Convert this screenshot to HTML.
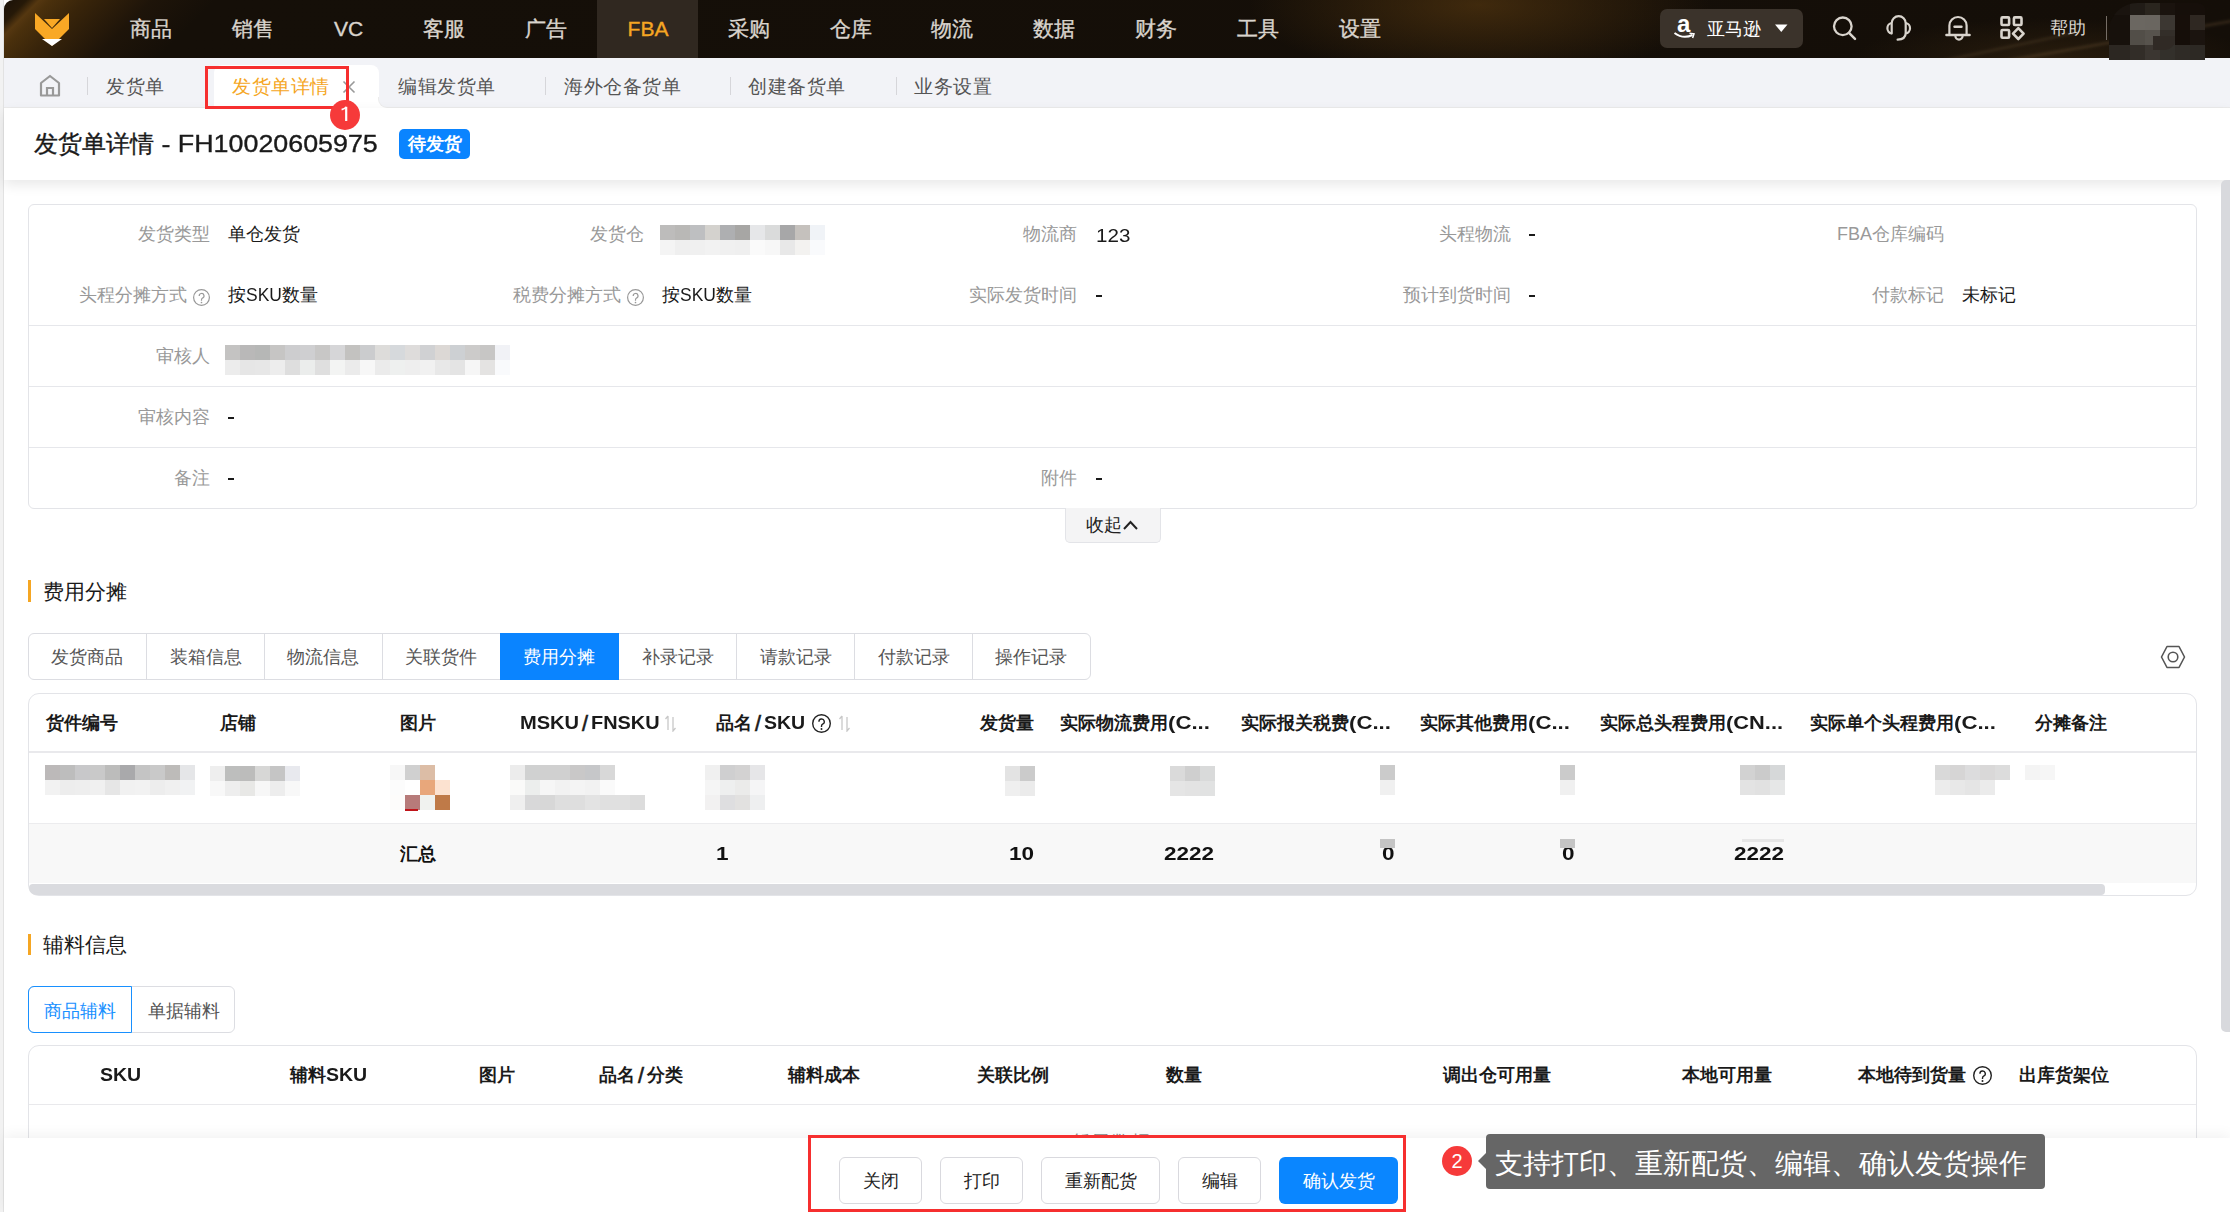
<!DOCTYPE html>
<html><head><meta charset="utf-8"><style>
*{box-sizing:border-box;margin:0;padding:0}
html,body{width:2230px;height:1212px;overflow:hidden;background:#fff;font-family:"Liberation Sans",sans-serif;color:#222}
.a{position:absolute;white-space:nowrap}
</style></head><body>
<div class="a" style="left:0px;top:0px;width:4px;height:1212px;background:#f2f2f2;border-right:1px solid #e2e2e2"></div>
<div class="a" style="left:4px;top:0;width:2226px;height:58px;border-top-left-radius:9px;overflow:hidden;background:radial-gradient(ellipse 230px 75px at 1475px 5px, rgba(90,58,16,.62), rgba(0,0,0,0)),radial-gradient(ellipse 200px 40px at 2050px 58px, rgba(60,42,18,.5), rgba(0,0,0,0)),linear-gradient(135deg,#1a1108 0px,#261908 16px,#553710 25px,#4a300c 33px,#38240a 58px,#1e1409 105px,#150f08 150px,#140e08 100%)"></div>
<div class="a" style="left:1980px;top:38px;width:300px;height:2px;background:rgba(140,110,70,.35);transform:rotate(-10deg);filter:blur(1.5px)"></div>
<div class="a" style="left:1880px;top:52px;width:200px;height:2px;background:rgba(140,110,70,.25);transform:rotate(-12deg);filter:blur(1.5px)"></div>
<svg class="a" style="left:34px;top:12px" width="36" height="36" viewBox="0 0 36 36"><path d="M1 1 L1 17 L18 34 L35 17 L35 1 L18 17 Z" fill="#f9a825"/><path d="M10 7 L26 7 L18 16 Z" fill="#f9a825"/><path d="M8 27 L28 27 L18 34 Z" fill="#ffffff"/></svg>
<div class="a" style="left:597px;top:0px;width:101px;height:58px;background:#302820;"></div>
<div class="a" style="left:91px;width:120px;text-align:center;top:0;height:58px;line-height:58px;font-size:21px;color:#d9d4cd;-webkit-text-stroke:0.35px #d9d4cd">商品</div>
<div class="a" style="left:192.5px;width:120px;text-align:center;top:0;height:58px;line-height:58px;font-size:21px;color:#d9d4cd;-webkit-text-stroke:0.35px #d9d4cd">销售</div>
<div class="a" style="left:288.5px;width:120px;text-align:center;top:0;height:58px;line-height:58px;font-size:21px;color:#d9d4cd;-webkit-text-stroke:0.35px #d9d4cd">VC</div>
<div class="a" style="left:384px;width:120px;text-align:center;top:0;height:58px;line-height:58px;font-size:21px;color:#d9d4cd;-webkit-text-stroke:0.35px #d9d4cd">客服</div>
<div class="a" style="left:485.70000000000005px;width:120px;text-align:center;top:0;height:58px;line-height:58px;font-size:21px;color:#d9d4cd;-webkit-text-stroke:0.35px #d9d4cd">广告</div>
<div class="a" style="left:588px;width:120px;text-align:center;top:0;height:58px;line-height:58px;font-size:21px;color:#f5a623;-webkit-text-stroke:0.35px #f5a623">FBA</div>
<div class="a" style="left:688.5px;width:120px;text-align:center;top:0;height:58px;line-height:58px;font-size:21px;color:#d9d4cd;-webkit-text-stroke:0.35px #d9d4cd">采购</div>
<div class="a" style="left:790.5px;width:120px;text-align:center;top:0;height:58px;line-height:58px;font-size:21px;color:#d9d4cd;-webkit-text-stroke:0.35px #d9d4cd">仓库</div>
<div class="a" style="left:892px;width:120px;text-align:center;top:0;height:58px;line-height:58px;font-size:21px;color:#d9d4cd;-webkit-text-stroke:0.35px #d9d4cd">物流</div>
<div class="a" style="left:994px;width:120px;text-align:center;top:0;height:58px;line-height:58px;font-size:21px;color:#d9d4cd;-webkit-text-stroke:0.35px #d9d4cd">数据</div>
<div class="a" style="left:1096px;width:120px;text-align:center;top:0;height:58px;line-height:58px;font-size:21px;color:#d9d4cd;-webkit-text-stroke:0.35px #d9d4cd">财务</div>
<div class="a" style="left:1198px;width:120px;text-align:center;top:0;height:58px;line-height:58px;font-size:21px;color:#d9d4cd;-webkit-text-stroke:0.35px #d9d4cd">工具</div>
<div class="a" style="left:1300px;width:120px;text-align:center;top:0;height:58px;line-height:58px;font-size:21px;color:#d9d4cd;-webkit-text-stroke:0.35px #d9d4cd">设置</div>
<div class="a" style="left:1660px;top:9px;width:143px;height:39px;background:#3b332b;border-radius:7px"></div>
<div class="a" style="left:1677px;top:9px;font-size:24px;font-weight:bold;color:#fff;line-height:30px">a</div>
<svg class="a" style="left:1673px;top:30px" width="24" height="10" viewBox="0 0 24 10"><path d="M1.5 3 Q10 9.5 19.5 5" stroke="#fff" stroke-width="2" fill="none"/><path d="M16.5 3.2 L21 3.8 L19.6 8" stroke="#fff" stroke-width="1.5" fill="none"/></svg>
<div class="a" style="left:1707px;top:15px;font-size:18px;line-height:28px;color:#fff;font-weight:normal;">亚马逊</div>
<svg class="a" style="left:1775px;top:24px" width="13" height="9" viewBox="0 0 13 9"><path d="M0 0.5 L12.5 0.5 L6.25 8 Z" fill="#fff"/></svg>
<svg class="a" style="left:1830px;top:14px" width="28" height="28" viewBox="0 0 28 28"><circle cx="12.8" cy="12.3" r="8.8" stroke="#d9d4cd" stroke-width="2.3" fill="none"/><path d="M19 18.8 L25 24.8" stroke="#d9d4cd" stroke-width="2.5" stroke-linecap="round"/></svg>
<svg class="a" style="left:1884px;top:14px" width="30" height="28" viewBox="0 0 30 28"><path d="M7.7 19.5 L7.7 9.2 A7 7 0 0 1 21.7 9.2 L21.7 19 Q21.7 25.4 13.6 25.6" stroke="#d9d4cd" stroke-width="2.2" fill="none" stroke-linecap="round"/><path d="M7.7 9 A5 5.3 0 0 0 7.7 19.5" stroke="#d9d4cd" stroke-width="2.2" fill="none"/><path d="M21.7 9 A5 5.3 0 0 1 21.7 19.5" stroke="#d9d4cd" stroke-width="2.2" fill="none"/></svg>
<svg class="a" style="left:1944px;top:14px" width="28" height="28" viewBox="0 0 28 28"><path d="M5.4 21 L5.4 11.6 A8.6 8.6 0 0 1 22.6 11.6 L22.6 21" stroke="#d9d4cd" stroke-width="2.2" fill="none"/><path d="M2.4 21 L25.6 21" stroke="#d9d4cd" stroke-width="2.4" stroke-linecap="round"/><path d="M10.5 12.7 L17.5 12.7" stroke="#d9d4cd" stroke-width="2.4" stroke-linecap="round"/><path d="M11.4 22 A3.6 3.6 0 0 0 18.6 22" stroke="#d9d4cd" stroke-width="2.2" fill="none"/></svg>
<svg class="a" style="left:1998px;top:14px" width="28" height="28" viewBox="0 0 28 28"><rect x="3.5" y="3.4" width="7.6" height="7.6" rx="1" stroke="#d9d4cd" stroke-width="2.6" fill="none"/><rect x="15.9" y="3.4" width="7.6" height="7.6" rx="1" stroke="#d9d4cd" stroke-width="2.6" fill="none"/><rect x="3.5" y="16" width="7.6" height="7.8" rx="1" stroke="#d9d4cd" stroke-width="2.6" fill="none"/><path d="M20.3 14.2 L25.6 19.6 L20.3 25 L15 19.6 Z" stroke="#d9d4cd" stroke-width="2.6" fill="none" stroke-linejoin="round"/></svg>
<div class="a" style="left:2050px;top:14px;font-size:18px;line-height:28px;color:#d9d4cd;font-weight:normal;">帮助</div>
<div class="a" style="left:2106px;top:16px;width:1px;height:24px;background:#756d65;"></div>
<div class="a" style="left:2109px;top:3px;width:97px;height:57px;overflow:hidden;border-radius:28px 8px 0 0;z-index:5">
<div class="a" style="left:0px;top:-3px;width:21px;height:15px;background:#1a140f"></div>
<div class="a" style="left:21px;top:-3px;width:15px;height:15px;background:#211c17"></div>
<div class="a" style="left:36px;top:-3px;width:15px;height:15px;background:#2a251e"></div>
<div class="a" style="left:51px;top:-3px;width:15px;height:15px;background:#1a130e"></div>
<div class="a" style="left:66px;top:-3px;width:15px;height:15px;background:#160f0a"></div>
<div class="a" style="left:81px;top:-3px;width:15px;height:15px;background:#160f0a"></div>
<div class="a" style="left:0px;top:12px;width:21px;height:15px;background:#16100b"></div>
<div class="a" style="left:21px;top:12px;width:15px;height:15px;background:#6b6761"></div>
<div class="a" style="left:36px;top:12px;width:15px;height:15px;background:#6a6660"></div>
<div class="a" style="left:51px;top:12px;width:15px;height:15px;background:#3c3732"></div>
<div class="a" style="left:66px;top:12px;width:15px;height:15px;background:#170f0a"></div>
<div class="a" style="left:81px;top:12px;width:15px;height:15px;background:#2f2822"></div>
<div class="a" style="left:0px;top:27px;width:21px;height:15px;background:#17110c"></div>
<div class="a" style="left:21px;top:27px;width:15px;height:15px;background:#524e48"></div>
<div class="a" style="left:36px;top:27px;width:15px;height:15px;background:#57534d"></div>
<div class="a" style="left:51px;top:27px;width:15px;height:15px;background:#332e29"></div>
<div class="a" style="left:66px;top:27px;width:15px;height:15px;background:#150e09"></div>
<div class="a" style="left:81px;top:27px;width:15px;height:15px;background:#1b140f"></div>
<div class="a" style="left:0px;top:42px;width:21px;height:15px;background:#2c2722"></div>
<div class="a" style="left:21px;top:42px;width:15px;height:15px;background:#322d28"></div>
<div class="a" style="left:36px;top:42px;width:15px;height:15px;background:#3b3631"></div>
<div class="a" style="left:51px;top:42px;width:15px;height:15px;background:#33302b"></div>
<div class="a" style="left:66px;top:42px;width:15px;height:15px;background:#2f2b26"></div>
<div class="a" style="left:81px;top:42px;width:15px;height:15px;background:#2d2924"></div>
<div class="a" style="left:44px;top:33px;width:22px;height:14px;background:#302a25;border-radius:0 0 10px 0"></div>
</div>
<div class="a" style="left:4px;top:58px;width:2226px;height:50px;background:#f2f3f7;border-bottom:1px solid #ebebeb"></div>
<svg class="a" style="left:39px;top:74px" width="22" height="23" viewBox="0 0 22 23"><path d="M2 21.5 L2 9 L11 2 L20 9 L20 21.5 Z" stroke="#999" stroke-width="2.2" fill="none" stroke-linejoin="round"/><path d="M8 21.5 L8 14 L14 14 L14 21.5" stroke="#999" stroke-width="2.2" fill="none"/></svg>
<div class="a" style="left:87px;top:77px;width:1px;height:18px;background:#d6d6da;"></div>
<div class="a" style="left:214px;top:65px;width:165px;height:44px;background:#fff;border-radius:8px 8px 0 0"></div>
<div class="a" style="left:378px;top:97px;width:10px;height:11px;background:#fff;"></div>
<div class="a" style="left:378px;top:97px;width:10px;height:11px;background:#f2f3f7;border-bottom-left-radius:9px;border-left:1px solid #ececec;border-bottom:1px solid #ebebeb"></div>
<div class="a" style="left:106px;top:73px;font-size:19px;line-height:28px;color:#555;font-weight:normal;letter-spacing:0.6px">发货单</div>
<div class="a" style="left:232px;top:73px;font-size:19px;line-height:28px;color:#f5a623;font-weight:normal;letter-spacing:0.6px">发货单详情</div>
<div class="a" style="left:398px;top:73px;font-size:19px;line-height:28px;color:#555;font-weight:normal;letter-spacing:0.6px">编辑发货单</div>
<div class="a" style="left:564px;top:73px;font-size:19px;line-height:28px;color:#555;font-weight:normal;letter-spacing:0.6px">海外仓备货单</div>
<div class="a" style="left:748px;top:73px;font-size:19px;line-height:28px;color:#555;font-weight:normal;letter-spacing:0.6px">创建备货单</div>
<div class="a" style="left:914px;top:73px;font-size:19px;line-height:28px;color:#555;font-weight:normal;letter-spacing:0.6px">业务设置</div>
<svg class="a" style="left:342px;top:80px" width="14" height="14" viewBox="0 0 14 14"><path d="M1.5 1.5 L12.5 12.5 M12.5 1.5 L1.5 12.5" stroke="#999" stroke-width="1.6"/></svg>
<div class="a" style="left:545px;top:77px;width:1px;height:18px;background:#d6d6da;"></div>
<div class="a" style="left:730px;top:77px;width:1px;height:18px;background:#d6d6da;"></div>
<div class="a" style="left:896px;top:77px;width:1px;height:18px;background:#d6d6da;"></div>
<div class="a" style="left:4px;top:108px;width:2226px;height:72px;background:#fff;box-shadow:0 5px 12px rgba(0,0,0,.09)"></div>
<div class="a" style="left:34px;top:126px;font-size:24px;line-height:36px;color:#1a1a1a;font-weight:normal;-webkit-text-stroke:0.35px #1a1a1a">发货单详情<span style="display:inline-block;white-space:pre;width:223.74px;transform:scaleX(1.1180);transform-origin:0 0"> - FH10020605975</span></div>
<div class="a" style="left:399px;top:129px;width:71px;height:30px;background:#0a84ff;border-radius:5px;color:#fff;font-size:18px;font-weight:bold;text-align:center;line-height:30px">待发货</div>
<div class="a" style="left:28px;top:204px;width:2169px;height:305px;border:1px solid #e3e4e8;border-radius:6px;background:#fff"></div>
<div class="a" style="left:29px;top:325px;width:2167px;height:1px;background:#e6e7eb;"></div>
<div class="a" style="left:29px;top:386px;width:2167px;height:1px;background:#e6e7eb;"></div>
<div class="a" style="left:29px;top:447px;width:2167px;height:1px;background:#e6e7eb;"></div>
<div class="a" style="right:2020px;top:220px;font-size:18px;line-height:28px;color:#999">发货类型</div>
<div class="a" style="left:228px;top:220px;font-size:18px;line-height:28px;color:#1a1a1a">单仓发货</div>
<div class="a" style="right:1586px;top:220px;font-size:18px;line-height:28px;color:#999">发货仓</div>
<div class="a" style="left:660px;top:225px;width:15px;height:15px;background:#bdbcbb;"></div>
<div class="a" style="left:675px;top:225px;width:15px;height:15px;background:#b9b8b6;"></div>
<div class="a" style="left:690px;top:225px;width:15px;height:15px;background:#bebfc1;"></div>
<div class="a" style="left:705px;top:225px;width:15px;height:15px;background:#d4d2ce;"></div>
<div class="a" style="left:720px;top:225px;width:15px;height:15px;background:#aeafb1;"></div>
<div class="a" style="left:735px;top:225px;width:15px;height:15px;background:#a7a6a4;"></div>
<div class="a" style="left:750px;top:225px;width:15px;height:15px;background:#e6e7e9;"></div>
<div class="a" style="left:765px;top:225px;width:15px;height:15px;background:#dadbdb;"></div>
<div class="a" style="left:780px;top:225px;width:15px;height:15px;background:#a7a7a8;"></div>
<div class="a" style="left:795px;top:225px;width:15px;height:15px;background:#c5c1bd;"></div>
<div class="a" style="left:810px;top:225px;width:15px;height:15px;background:#f0f3f7;"></div>
<div class="a" style="left:660px;top:240px;width:15px;height:15px;background:#f4f4f4;"></div>
<div class="a" style="left:675px;top:240px;width:15px;height:15px;background:#efefef;"></div>
<div class="a" style="left:690px;top:240px;width:15px;height:15px;background:#f0f0f0;"></div>
<div class="a" style="left:705px;top:240px;width:15px;height:15px;background:#f2f2f2;"></div>
<div class="a" style="left:720px;top:240px;width:15px;height:15px;background:#f0f0f0;"></div>
<div class="a" style="left:735px;top:240px;width:15px;height:15px;background:#efefef;"></div>
<div class="a" style="left:750px;top:240px;width:15px;height:15px;background:#fafafa;"></div>
<div class="a" style="left:765px;top:240px;width:15px;height:15px;background:#f7f7f7;"></div>
<div class="a" style="left:780px;top:240px;width:15px;height:15px;background:#e8e8e8;"></div>
<div class="a" style="left:795px;top:240px;width:15px;height:15px;background:#f3f2f0;"></div>
<div class="a" style="left:810px;top:240px;width:15px;height:15px;background:#f9fafc;"></div>
<div class="a" style="right:1153px;top:220px;font-size:18px;line-height:28px;color:#999">物流商</div>
<div class="a" style="left:1096px;top:222px;font-size:18px;line-height:28px;color:#1a1a1a"><span style="display:inline-block;white-space:pre;width:34.36px;transform:scaleX(1.1441);transform-origin:0 0">123</span></div>
<div class="a" style="right:719px;top:220px;font-size:18px;line-height:28px;color:#999">头程物流</div>
<div class="a" style="left:1529px;top:234.0px;width:6px;height:2.4px;background:#1a1a1a"></div>
<div class="a" style="right:286px;top:220px;font-size:18px;line-height:28px;color:#999">FBA仓库编码</div>
<svg class="a" style="left:193px;top:289px" width="17" height="17" viewBox="0 0 17 17"><circle cx="8.5" cy="8.5" r="7.9" stroke="#999" stroke-width="1.2" fill="none"/><g transform="scale(1.0000)"><path d="M6.2 6.9 A2.4 2.4 0 1 1 9.5 9.1 Q8.5 9.7 8.5 10.9 L8.5 11.7" stroke="#999" stroke-width="1.20" fill="none"/><circle cx="8.5" cy="13.5" r="0.84" fill="#999"/></g></svg>
<div class="a" style="right:2043px;top:281px;font-size:18px;line-height:28px;color:#999">头程分摊方式</div>
<div class="a" style="left:228px;top:281px;font-size:18px;line-height:28px;color:#1a1a1a">按<span style="display:inline-block;white-space:pre;width:35.92px;transform:scaleX(0.9705);transform-origin:0 0">SKU</span>数量</div>
<svg class="a" style="left:627px;top:289px" width="17" height="17" viewBox="0 0 17 17"><circle cx="8.5" cy="8.5" r="7.9" stroke="#999" stroke-width="1.2" fill="none"/><g transform="scale(1.0000)"><path d="M6.2 6.9 A2.4 2.4 0 1 1 9.5 9.1 Q8.5 9.7 8.5 10.9 L8.5 11.7" stroke="#999" stroke-width="1.20" fill="none"/><circle cx="8.5" cy="13.5" r="0.84" fill="#999"/></g></svg>
<div class="a" style="right:1609px;top:281px;font-size:18px;line-height:28px;color:#999">税费分摊方式</div>
<div class="a" style="left:662px;top:281px;font-size:18px;line-height:28px;color:#1a1a1a">按<span style="display:inline-block;white-space:pre;width:35.92px;transform:scaleX(0.9705);transform-origin:0 0">SKU</span>数量</div>
<div class="a" style="right:1153px;top:281px;font-size:18px;line-height:28px;color:#999">实际发货时间</div>
<div class="a" style="left:1096px;top:294.5px;width:6px;height:2.4px;background:#1a1a1a"></div>
<div class="a" style="right:719px;top:281px;font-size:18px;line-height:28px;color:#999">预计到货时间</div>
<div class="a" style="left:1529px;top:294.5px;width:6px;height:2.4px;background:#1a1a1a"></div>
<div class="a" style="right:286px;top:281px;font-size:18px;line-height:28px;color:#999">付款标记</div>
<div class="a" style="left:1962px;top:281px;font-size:18px;line-height:28px;color:#1a1a1a">未标记</div>
<div class="a" style="right:2020px;top:342px;font-size:18px;line-height:28px;color:#999">审核人</div>
<div class="a" style="left:225px;top:345px;width:15px;height:15px;background:#c4c3c2;"></div>
<div class="a" style="left:240px;top:345px;width:15px;height:15px;background:#b9b8b8;"></div>
<div class="a" style="left:255px;top:345px;width:15px;height:15px;background:#b6b7b6;"></div>
<div class="a" style="left:270px;top:345px;width:15px;height:15px;background:#c6c5c4;"></div>
<div class="a" style="left:285px;top:345px;width:15px;height:15px;background:#cdcdcf;"></div>
<div class="a" style="left:300px;top:345px;width:15px;height:15px;background:#cfcfd1;"></div>
<div class="a" style="left:315px;top:345px;width:15px;height:15px;background:#c8c7c6;"></div>
<div class="a" style="left:330px;top:345px;width:15px;height:15px;background:#d6d6d8;"></div>
<div class="a" style="left:345px;top:345px;width:15px;height:15px;background:#c3c2c0;"></div>
<div class="a" style="left:360px;top:345px;width:15px;height:15px;background:#cbccce;"></div>
<div class="a" style="left:375px;top:345px;width:15px;height:15px;background:#dddcda;"></div>
<div class="a" style="left:390px;top:345px;width:15px;height:15px;background:#d6d9dc;"></div>
<div class="a" style="left:405px;top:345px;width:15px;height:15px;background:#dedcdb;"></div>
<div class="a" style="left:420px;top:345px;width:15px;height:15px;background:#d0d1d3;"></div>
<div class="a" style="left:435px;top:345px;width:15px;height:15px;background:#dcd8d5;"></div>
<div class="a" style="left:450px;top:345px;width:15px;height:15px;background:#cdd0d3;"></div>
<div class="a" style="left:465px;top:345px;width:15px;height:15px;background:#cccbca;"></div>
<div class="a" style="left:480px;top:345px;width:15px;height:15px;background:#c7c6c5;"></div>
<div class="a" style="left:495px;top:345px;width:15px;height:15px;background:#f1f2f6;"></div>
<div class="a" style="left:225px;top:360px;width:15px;height:15px;background:#ececec;"></div>
<div class="a" style="left:240px;top:360px;width:15px;height:15px;background:#e6e6e6;"></div>
<div class="a" style="left:255px;top:360px;width:15px;height:15px;background:#e7e7e7;"></div>
<div class="a" style="left:270px;top:360px;width:15px;height:15px;background:#ededed;"></div>
<div class="a" style="left:285px;top:360px;width:15px;height:15px;background:#dedede;"></div>
<div class="a" style="left:300px;top:360px;width:15px;height:15px;background:#ebedec;"></div>
<div class="a" style="left:315px;top:360px;width:15px;height:15px;background:#dfdfdf;"></div>
<div class="a" style="left:330px;top:360px;width:15px;height:15px;background:#f3f4f3;"></div>
<div class="a" style="left:345px;top:360px;width:15px;height:15px;background:#ebebeb;"></div>
<div class="a" style="left:360px;top:360px;width:15px;height:15px;background:#f7f7f7;"></div>
<div class="a" style="left:375px;top:360px;width:15px;height:15px;background:#ebebeb;"></div>
<div class="a" style="left:390px;top:360px;width:15px;height:15px;background:#eef0ef;"></div>
<div class="a" style="left:405px;top:360px;width:15px;height:15px;background:#eeeeee;"></div>
<div class="a" style="left:420px;top:360px;width:15px;height:15px;background:#f1f1f1;"></div>
<div class="a" style="left:435px;top:360px;width:15px;height:15px;background:#e8e8e8;"></div>
<div class="a" style="left:450px;top:360px;width:15px;height:15px;background:#e4e4e4;"></div>
<div class="a" style="left:465px;top:360px;width:15px;height:15px;background:#f6f6f6;"></div>
<div class="a" style="left:480px;top:360px;width:15px;height:15px;background:#e4e3e2;"></div>
<div class="a" style="left:495px;top:360px;width:15px;height:15px;background:#f9fafc;"></div>
<div class="a" style="right:2020px;top:403px;font-size:18px;line-height:28px;color:#999">审核内容</div>
<div class="a" style="left:228px;top:416.5px;width:6px;height:2.4px;background:#1a1a1a"></div>
<div class="a" style="right:2020px;top:464px;font-size:18px;line-height:28px;color:#999">备注</div>
<div class="a" style="left:228px;top:477.5px;width:6px;height:2.4px;background:#1a1a1a"></div>
<div class="a" style="right:1153px;top:464px;font-size:18px;line-height:28px;color:#999">附件</div>
<div class="a" style="left:1096px;top:477.5px;width:6px;height:2.4px;background:#1a1a1a"></div>
<div class="a" style="left:1065px;top:508px;width:96px;height:35px;background:#f4f4f5;border:1px solid #e3e4e8;border-top:none;border-radius:0 0 5px 5px"></div>
<div class="a" style="left:1086px;top:511px;font-size:18px;line-height:28px;color:#222;font-weight:normal;">收起</div>
<svg class="a" style="left:1122px;top:518px" width="17" height="13" viewBox="0 0 17 13"><path d="M2 11 L8.5 4 L15 11" stroke="#222" stroke-width="2" fill="none"/></svg>
<div class="a" style="left:28px;top:580px;width:3px;height:22px;background:#f5a623;"></div>
<div class="a" style="left:43px;top:577px;font-size:21px;line-height:30px;color:#1a1a1a;font-weight:normal;">费用分摊</div>
<div class="a" style="left:28px;top:633px;width:1063px;height:47px;border:1px solid #dcdde2;border-radius:6px;background:#fff"></div>
<div class="a" style="left:28px;width:118.5px;text-align:center;top:643px;font-size:18px;line-height:28px;color:#555">发货商品</div>
<div class="a" style="left:146px;top:634px;width:1px;height:45px;background:#dcdde2;"></div>
<div class="a" style="left:146.5px;width:118.10000000000002px;text-align:center;top:643px;font-size:18px;line-height:28px;color:#555">装箱信息</div>
<div class="a" style="left:264px;top:634px;width:1px;height:45px;background:#dcdde2;"></div>
<div class="a" style="left:264.6px;width:117.59999999999997px;text-align:center;top:643px;font-size:18px;line-height:28px;color:#555">物流信息</div>
<div class="a" style="left:382px;top:634px;width:1px;height:45px;background:#dcdde2;"></div>
<div class="a" style="left:382.2px;width:117.40000000000003px;text-align:center;top:643px;font-size:18px;line-height:28px;color:#555">关联货件</div>
<div class="a" style="left:499.6px;top:633px;width:119.10000000000002px;height:47px;background:#0a84ff"></div>
<div class="a" style="left:499.6px;width:119.10000000000002px;text-align:center;top:643px;font-size:18px;line-height:28px;color:#fff">费用分摊</div>
<div class="a" style="left:618.7px;width:117.69999999999993px;text-align:center;top:643px;font-size:18px;line-height:28px;color:#555">补录记录</div>
<div class="a" style="left:736px;top:634px;width:1px;height:45px;background:#dcdde2;"></div>
<div class="a" style="left:736.4px;width:118.30000000000007px;text-align:center;top:643px;font-size:18px;line-height:28px;color:#555">请款记录</div>
<div class="a" style="left:854px;top:634px;width:1px;height:45px;background:#dcdde2;"></div>
<div class="a" style="left:854.7px;width:117.69999999999993px;text-align:center;top:643px;font-size:18px;line-height:28px;color:#555">付款记录</div>
<div class="a" style="left:972px;top:634px;width:1px;height:45px;background:#dcdde2;"></div>
<div class="a" style="left:972.4px;width:118.00000000000011px;text-align:center;top:643px;font-size:18px;line-height:28px;color:#555">操作记录</div>
<svg class="a" style="left:2160px;top:645px" width="26" height="24" viewBox="0 0 26 24"><path d="M7 1.5 L19 1.5 L24.5 12 L19 22.5 L7 22.5 L1.5 12 Z" stroke="#555" stroke-width="1.6" fill="none" stroke-linejoin="round"/><circle cx="13" cy="12" r="4.8" stroke="#555" stroke-width="1.6" fill="none"/></svg>
<div class="a" style="left:28px;top:693px;width:2169px;height:203px;border:1px solid #e3e4e8;border-radius:11px;background:#fff;overflow:hidden"></div>
<div class="a" style="left:29px;top:751px;width:2167px;height:2px;background:#e9e9ec;"></div>
<div class="a" style="left:29px;top:823px;width:2167px;height:60px;background:#f8f8f8;border-top:1px solid #ececee"></div>
<div class="a" style="left:29px;top:884px;width:2076px;height:11px;background:#dadbdf;border-radius:6px 6px 6px 11px"></div>
<div class="a" style="left:46px;top:709px;font-size:18px;line-height:28px;font-weight:bold;color:#1a1a1a">货件编号</div>
<div class="a" style="left:220px;top:709px;font-size:18px;line-height:28px;font-weight:bold;color:#1a1a1a">店铺</div>
<div class="a" style="left:400px;top:709px;font-size:18px;line-height:28px;font-weight:bold;color:#1a1a1a">图片</div>
<div class="a" style="left:520px;top:709px;font-size:18px;line-height:28px;font-weight:bold;color:#1a1a1a"><span style="display:inline-block;white-space:pre;width:59.12px;transform:scaleX(1.1156);transform-origin:0 0">MSKU</span><span style="display:inline-block;font-size:21.6px;line-height:0;margin:0 2.5px 0 3px;position:relative;top:1.8px;font-weight:normal;-webkit-text-stroke:0.6px">/</span><span style="display:inline-block;white-space:pre;width:68.57px;transform:scaleX(1.1060);transform-origin:0 0">FNSKU</span></div>
<div class="a" style="left:716px;top:709px;font-size:18px;line-height:28px;font-weight:bold;color:#1a1a1a">品名<span style="display:inline-block;font-size:21.6px;line-height:0;margin:0 2.5px 0 3px;position:relative;top:1.8px;font-weight:normal;-webkit-text-stroke:0.6px">/</span><span style="display:inline-block;white-space:pre;width:41.21px;transform:scaleX(1.0844);transform-origin:0 0">SKU</span></div>
<div class="a" style="right:1196px;top:709px;font-size:18px;line-height:28px;font-weight:bold;color:#1a1a1a">发货量</div>
<div class="a" style="left:1060px;top:709px;font-size:18px;line-height:28px;font-weight:bold;color:#1a1a1a">实际物流费用<span style="display:inline-block;white-space:pre;width:41.95px;transform:scaleX(1.2340);transform-origin:0 0">(C...</span></div>
<div class="a" style="left:1241px;top:709px;font-size:18px;line-height:28px;font-weight:bold;color:#1a1a1a">实际报关税费<span style="display:inline-block;white-space:pre;width:41.95px;transform:scaleX(1.2340);transform-origin:0 0">(C...</span></div>
<div class="a" style="left:1420px;top:709px;font-size:18px;line-height:28px;font-weight:bold;color:#1a1a1a">实际其他费用<span style="display:inline-block;white-space:pre;width:41.95px;transform:scaleX(1.2340);transform-origin:0 0">(C...</span></div>
<div class="a" style="left:1600px;top:709px;font-size:18px;line-height:28px;font-weight:bold;color:#1a1a1a">实际总头程费用<span style="display:inline-block;white-space:pre;width:57.01px;transform:scaleX(1.2132);transform-origin:0 0">(CN...</span></div>
<div class="a" style="left:1810px;top:709px;font-size:18px;line-height:28px;font-weight:bold;color:#1a1a1a">实际单个头程费用<span style="display:inline-block;white-space:pre;width:41.95px;transform:scaleX(1.2340);transform-origin:0 0">(C...</span></div>
<div class="a" style="left:2035px;top:709px;font-size:18px;line-height:28px;font-weight:bold;color:#1a1a1a">分摊备注</div>
<svg class="a" style="left:812px;top:714px" width="19" height="19" viewBox="0 0 19 19"><circle cx="9.5" cy="9.5" r="8.8" stroke="#222" stroke-width="1.4" fill="none"/><g transform="scale(1.1176)"><path d="M6.2 6.9 A2.4 2.4 0 1 1 9.5 9.1 Q8.5 9.7 8.5 10.9 L8.5 11.7" stroke="#222" stroke-width="1.25" fill="none"/><circle cx="8.5" cy="13.5" r="0.88" fill="#222"/></g></svg>
<svg class="a" style="left:664px;top:715px" width="13" height="17" viewBox="0 0 13 17"><path d="M4 1 L4 15 M4 1 L1.5 4" stroke="#c8c8c8" stroke-width="1.3" fill="none"/><path d="M9 2 L9 16 L11.5 13" stroke="#c8c8c8" stroke-width="1.3" fill="none"/></svg>
<svg class="a" style="left:838px;top:715px" width="13" height="17" viewBox="0 0 13 17"><path d="M4 1 L4 15 M4 1 L1.5 4" stroke="#c8c8c8" stroke-width="1.3" fill="none"/><path d="M9 2 L9 16 L11.5 13" stroke="#c8c8c8" stroke-width="1.3" fill="none"/></svg>
<div class="a" style="left:45px;top:765px;width:15px;height:15px;background:#bcb9b9;"></div>
<div class="a" style="left:60px;top:765px;width:15px;height:15px;background:#bdbdbd;"></div>
<div class="a" style="left:75px;top:765px;width:15px;height:15px;background:#c8c8ca;"></div>
<div class="a" style="left:90px;top:765px;width:15px;height:15px;background:#c9c9c9;"></div>
<div class="a" style="left:105px;top:765px;width:15px;height:15px;background:#bcbcbb;"></div>
<div class="a" style="left:120px;top:765px;width:15px;height:15px;background:#a9a9ab;"></div>
<div class="a" style="left:135px;top:765px;width:15px;height:15px;background:#c4c4c4;"></div>
<div class="a" style="left:150px;top:765px;width:15px;height:15px;background:#c9c9c9;"></div>
<div class="a" style="left:165px;top:765px;width:15px;height:15px;background:#bdbbb9;"></div>
<div class="a" style="left:180px;top:765px;width:15px;height:15px;background:#e5e6e8;"></div>
<div class="a" style="left:45px;top:780px;width:15px;height:15px;background:#f2f2f2;"></div>
<div class="a" style="left:60px;top:780px;width:15px;height:15px;background:#ededed;"></div>
<div class="a" style="left:75px;top:780px;width:15px;height:15px;background:#eeeeee;"></div>
<div class="a" style="left:90px;top:780px;width:15px;height:15px;background:#f0f0f0;"></div>
<div class="a" style="left:105px;top:780px;width:15px;height:15px;background:#e6e6e6;"></div>
<div class="a" style="left:120px;top:780px;width:15px;height:15px;background:#f1f1f1;"></div>
<div class="a" style="left:135px;top:780px;width:15px;height:15px;background:#f2f2f2;"></div>
<div class="a" style="left:150px;top:780px;width:15px;height:15px;background:#ededed;"></div>
<div class="a" style="left:165px;top:780px;width:15px;height:15px;background:#f0f0f0;"></div>
<div class="a" style="left:180px;top:780px;width:15px;height:15px;background:#f1f2f3;"></div>
<div class="a" style="left:210px;top:766px;width:15px;height:15px;background:#eeeeee;"></div>
<div class="a" style="left:225px;top:766px;width:15px;height:15px;background:#bdbebd;"></div>
<div class="a" style="left:240px;top:766px;width:15px;height:15px;background:#bcbcbb;"></div>
<div class="a" style="left:255px;top:766px;width:15px;height:15px;background:#d7d7d6;"></div>
<div class="a" style="left:270px;top:766px;width:15px;height:15px;background:#c5c5c5;"></div>
<div class="a" style="left:285px;top:766px;width:15px;height:15px;background:#e8e9ee;"></div>
<div class="a" style="left:210px;top:781px;width:15px;height:15px;background:#f8f8f8;"></div>
<div class="a" style="left:225px;top:781px;width:15px;height:15px;background:#eeeeee;"></div>
<div class="a" style="left:240px;top:781px;width:15px;height:15px;background:#e8e8e6;"></div>
<div class="a" style="left:255px;top:781px;width:15px;height:15px;background:#f7f7f7;"></div>
<div class="a" style="left:270px;top:781px;width:15px;height:15px;background:#ededed;"></div>
<div class="a" style="left:285px;top:781px;width:15px;height:15px;background:#f8f8f8;"></div>
<div class="a" style="left:390px;top:765px;width:15px;height:15px;background:#f7f7f7;"></div>
<div class="a" style="left:405px;top:765px;width:15px;height:15px;background:#d0d0d0;"></div>
<div class="a" style="left:420px;top:765px;width:15px;height:15px;background:#dcbda6;"></div>
<div class="a" style="left:390px;top:780px;width:15px;height:15px;background:#fcfcfc;"></div>
<div class="a" style="left:420px;top:780px;width:15px;height:15px;background:#e8a77b;"></div>
<div class="a" style="left:435px;top:780px;width:15px;height:15px;background:#fce2d0;"></div>
<div class="a" style="left:390px;top:795px;width:15px;height:15px;background:#fdfcfb;"></div>
<div class="a" style="left:405px;top:795px;width:15px;height:15px;background:#b77b7a;"></div>
<div class="a" style="left:420px;top:795px;width:15px;height:15px;background:#f0f2ef;"></div>
<div class="a" style="left:435px;top:795px;width:15px;height:15px;background:#bf7a48;"></div>
<div class="a" style="left:405px;top:809px;width:13px;height:2px;background:#c0141a;"></div>
<div class="a" style="left:510px;top:765px;width:15px;height:15px;background:#ececec;"></div>
<div class="a" style="left:525px;top:765px;width:15px;height:15px;background:#d0d1d1;"></div>
<div class="a" style="left:540px;top:765px;width:15px;height:15px;background:#d0d0d0;"></div>
<div class="a" style="left:555px;top:765px;width:15px;height:15px;background:#d0d0d0;"></div>
<div class="a" style="left:570px;top:765px;width:15px;height:15px;background:#c9c8c8;"></div>
<div class="a" style="left:585px;top:765px;width:15px;height:15px;background:#c6c7c9;"></div>
<div class="a" style="left:600px;top:765px;width:15px;height:15px;background:#d8d8d8;"></div>
<div class="a" style="left:510px;top:780px;width:15px;height:15px;background:#fafaf9;"></div>
<div class="a" style="left:525px;top:780px;width:15px;height:15px;background:#eceeed;"></div>
<div class="a" style="left:540px;top:780px;width:15px;height:15px;background:#f6f6f6;"></div>
<div class="a" style="left:555px;top:780px;width:15px;height:15px;background:#f2f2f2;"></div>
<div class="a" style="left:570px;top:780px;width:15px;height:15px;background:#f4f4f4;"></div>
<div class="a" style="left:585px;top:780px;width:15px;height:15px;background:#f2f2f2;"></div>
<div class="a" style="left:600px;top:780px;width:15px;height:15px;background:#fafafa;"></div>
<div class="a" style="left:510px;top:795px;width:15px;height:15px;background:#efefef;"></div>
<div class="a" style="left:525px;top:795px;width:15px;height:15px;background:#d8d8d9;"></div>
<div class="a" style="left:540px;top:795px;width:15px;height:15px;background:#d7d7d7;"></div>
<div class="a" style="left:555px;top:795px;width:15px;height:15px;background:#dedede;"></div>
<div class="a" style="left:570px;top:795px;width:15px;height:15px;background:#dedede;"></div>
<div class="a" style="left:585px;top:795px;width:15px;height:15px;background:#e3e3e3;"></div>
<div class="a" style="left:600px;top:795px;width:15px;height:15px;background:#e0e0e0;"></div>
<div class="a" style="left:615px;top:795px;width:15px;height:15px;background:#e0e0e0;"></div>
<div class="a" style="left:630px;top:795px;width:15px;height:15px;background:#dcdcdc;"></div>
<div class="a" style="left:705px;top:765px;width:15px;height:15px;background:#f0f0f0;"></div>
<div class="a" style="left:720px;top:765px;width:15px;height:15px;background:#cfcfd0;"></div>
<div class="a" style="left:735px;top:765px;width:15px;height:15px;background:#d3d2d2;"></div>
<div class="a" style="left:750px;top:765px;width:15px;height:15px;background:#e6e6e8;"></div>
<div class="a" style="left:705px;top:780px;width:15px;height:15px;background:#f5f5f5;"></div>
<div class="a" style="left:720px;top:780px;width:15px;height:15px;background:#eeefef;"></div>
<div class="a" style="left:735px;top:780px;width:15px;height:15px;background:#ebebea;"></div>
<div class="a" style="left:750px;top:780px;width:15px;height:15px;background:#f5f5f6;"></div>
<div class="a" style="left:705px;top:795px;width:15px;height:15px;background:#f2f1f1;"></div>
<div class="a" style="left:720px;top:795px;width:15px;height:15px;background:#dedee0;"></div>
<div class="a" style="left:735px;top:795px;width:15px;height:15px;background:#e2e1e0;"></div>
<div class="a" style="left:750px;top:795px;width:15px;height:15px;background:#eeeff0;"></div>
<div class="a" style="left:1005px;top:766px;width:15px;height:15px;background:#e3e3e3;"></div>
<div class="a" style="left:1020px;top:766px;width:15px;height:15px;background:#cbcbcb;"></div>
<div class="a" style="left:1005px;top:781px;width:15px;height:15px;background:#efefef;"></div>
<div class="a" style="left:1020px;top:781px;width:15px;height:15px;background:#ebebeb;"></div>
<div class="a" style="left:1170px;top:766px;width:15px;height:15px;background:#dadada;"></div>
<div class="a" style="left:1185px;top:766px;width:15px;height:15px;background:#cfcfcf;"></div>
<div class="a" style="left:1200px;top:766px;width:15px;height:15px;background:#d9dada;"></div>
<div class="a" style="left:1170px;top:781px;width:15px;height:15px;background:#e5e5e5;"></div>
<div class="a" style="left:1185px;top:781px;width:15px;height:15px;background:#e3e3e3;"></div>
<div class="a" style="left:1200px;top:781px;width:15px;height:15px;background:#e1e2e2;"></div>
<div class="a" style="left:1380px;top:765px;width:15px;height:15px;background:#cbcbcb;"></div>
<div class="a" style="left:1380px;top:780px;width:15px;height:15px;background:#f0f0f0;"></div>
<div class="a" style="left:1560px;top:765px;width:15px;height:15px;background:#cbcbcb;"></div>
<div class="a" style="left:1560px;top:780px;width:15px;height:15px;background:#f0f0f0;"></div>
<div class="a" style="left:1740px;top:765px;width:15px;height:15px;background:#d2d2d2;"></div>
<div class="a" style="left:1755px;top:765px;width:15px;height:15px;background:#cbcbcb;"></div>
<div class="a" style="left:1770px;top:765px;width:15px;height:15px;background:#d6d8d9;"></div>
<div class="a" style="left:1740px;top:780px;width:15px;height:15px;background:#e3e3e3;"></div>
<div class="a" style="left:1755px;top:780px;width:15px;height:15px;background:#e1e1e1;"></div>
<div class="a" style="left:1770px;top:780px;width:15px;height:15px;background:#e6e7e7;"></div>
<div class="a" style="left:1935px;top:765px;width:15px;height:15px;background:#d9d9d9;"></div>
<div class="a" style="left:1950px;top:765px;width:15px;height:15px;background:#d6d5d5;"></div>
<div class="a" style="left:1965px;top:765px;width:15px;height:15px;background:#dcdcdd;"></div>
<div class="a" style="left:1980px;top:765px;width:15px;height:15px;background:#d9d8d8;"></div>
<div class="a" style="left:1995px;top:765px;width:15px;height:15px;background:#dcdcdc;"></div>
<div class="a" style="left:1935px;top:780px;width:15px;height:15px;background:#ececec;"></div>
<div class="a" style="left:1950px;top:780px;width:15px;height:15px;background:#e8e8e8;"></div>
<div class="a" style="left:1965px;top:780px;width:15px;height:15px;background:#e5e5e5;"></div>
<div class="a" style="left:1980px;top:780px;width:15px;height:15px;background:#ebebeb;"></div>
<div class="a" style="left:2025px;top:765px;width:15px;height:15px;background:#f4f4f4;"></div>
<div class="a" style="left:2040px;top:765px;width:15px;height:15px;background:#f6f6f6;"></div>
<div class="a" style="left:400px;top:840px;font-size:18px;line-height:28px;font-weight:bold;color:#111">汇总</div>
<div class="a" style="left:716px;top:840px;font-size:18px;line-height:28px;font-weight:bold;color:#111"><span style="display:inline-block;white-space:pre;width:12.52px;transform:scaleX(1.2512);transform-origin:0 0">1</span></div>
<div class="a" style="right:1196px;top:840px;font-size:18px;line-height:28px;font-weight:bold;color:#111"><span style="display:inline-block;white-space:pre;width:25.05px;transform:scaleX(1.2512);transform-origin:0 0">10</span></div>
<div class="a" style="right:1016px;top:840px;font-size:18px;line-height:28px;font-weight:bold;color:#111"><span style="display:inline-block;white-space:pre;width:50.10px;transform:scaleX(1.2512);transform-origin:0 0">2222</span></div>
<div class="a" style="right:835px;top:840px;font-size:18px;line-height:28px;font-weight:bold;color:#111"><span style="display:inline-block;white-space:pre;width:12.52px;transform:scaleX(1.2512);transform-origin:0 0">0</span></div>
<div class="a" style="right:655px;top:840px;font-size:18px;line-height:28px;font-weight:bold;color:#111"><span style="display:inline-block;white-space:pre;width:12.52px;transform:scaleX(1.2512);transform-origin:0 0">0</span></div>
<div class="a" style="right:446px;top:840px;font-size:18px;line-height:28px;font-weight:bold;color:#111"><span style="display:inline-block;white-space:pre;width:50.10px;transform:scaleX(1.2512);transform-origin:0 0">2222</span></div>
<div class="a" style="left:1380px;top:839px;width:15px;height:9px;background:#c4c4c4;"></div>
<div class="a" style="left:1560px;top:839px;width:15px;height:9px;background:#c4c4c4;"></div>
<div class="a" style="left:1742px;top:839px;width:42px;height:3px;background:#e6e6e6;"></div>
<div class="a" style="left:28px;top:934px;width:3px;height:21px;background:#f5a623;"></div>
<div class="a" style="left:43px;top:930px;font-size:21px;line-height:30px;color:#1a1a1a;font-weight:normal;">辅料信息</div>
<div class="a" style="left:28px;top:986px;width:207px;height:47px;border:1px solid #dcdde2;border-radius:6px;background:#fff"></div>
<div class="a" style="left:28px;top:986px;width:104px;height:47px;border:1px solid #1890ff;border-radius:6px 0 0 6px"></div>
<div class="a" style="left:28px;width:104px;text-align:center;top:997px;font-size:18px;line-height:28px;color:#1890ff">商品辅料</div>
<div class="a" style="left:132px;width:103px;text-align:center;top:997px;font-size:18px;line-height:28px;color:#555">单据辅料</div>
<div class="a" style="left:28px;top:1045px;width:2169px;height:200px;border:1px solid #e3e4e8;border-radius:11px;background:#fff"></div>
<div class="a" style="left:29px;top:1104px;width:2167px;height:1px;background:#e9e9ec;"></div>
<div class="a" style="left:100px;top:1061px;font-size:18px;line-height:28px;font-weight:bold;color:#1a1a1a"><span style="display:inline-block;white-space:pre;width:41.21px;transform:scaleX(1.0844);transform-origin:0 0">SKU</span></div>
<div class="a" style="left:290px;top:1061px;font-size:18px;line-height:28px;font-weight:bold;color:#1a1a1a">辅料<span style="display:inline-block;white-space:pre;width:41.21px;transform:scaleX(1.0844);transform-origin:0 0">SKU</span></div>
<div class="a" style="left:479px;top:1061px;font-size:18px;line-height:28px;font-weight:bold;color:#1a1a1a">图片</div>
<div class="a" style="left:599px;top:1061px;font-size:18px;line-height:28px;font-weight:bold;color:#1a1a1a">品名<span style="display:inline-block;font-size:21.6px;line-height:0;margin:0 2.5px 0 3px;position:relative;top:1.8px;font-weight:normal;-webkit-text-stroke:0.6px">/</span>分类</div>
<div class="a" style="left:788px;top:1061px;font-size:18px;line-height:28px;font-weight:bold;color:#1a1a1a">辅料成本</div>
<div class="a" style="left:977px;top:1061px;font-size:18px;line-height:28px;font-weight:bold;color:#1a1a1a">关联比例</div>
<div class="a" style="left:1166px;top:1061px;font-size:18px;line-height:28px;font-weight:bold;color:#1a1a1a">数量</div>
<div class="a" style="left:1443px;top:1061px;font-size:18px;line-height:28px;font-weight:bold;color:#1a1a1a">调出仓可用量</div>
<div class="a" style="left:1682px;top:1061px;font-size:18px;line-height:28px;font-weight:bold;color:#1a1a1a">本地可用量</div>
<div class="a" style="left:1858px;top:1061px;font-size:18px;line-height:28px;font-weight:bold;color:#1a1a1a">本地待到货量</div>
<div class="a" style="left:2019px;top:1061px;font-size:18px;line-height:28px;font-weight:bold;color:#1a1a1a">出库货架位</div>
<svg class="a" style="left:1973px;top:1066px" width="19" height="19" viewBox="0 0 19 19"><circle cx="9.5" cy="9.5" r="8.8" stroke="#222" stroke-width="1.4" fill="none"/><g transform="scale(1.1176)"><path d="M6.2 6.9 A2.4 2.4 0 1 1 9.5 9.1 Q8.5 9.7 8.5 10.9 L8.5 11.7" stroke="#222" stroke-width="1.25" fill="none"/><circle cx="8.5" cy="13.5" r="0.88" fill="#222"/></g></svg>
<div class="a" style="left:1072px;top:1128px;font-size:18px;line-height:28px;color:#888;letter-spacing:2px">暂无数据</div>
<div class="a" style="left:4px;top:1138px;width:2226px;height:74px;background:#fff;box-shadow:0 -4px 12px rgba(0,0,0,.05)"></div>
<div class="a" style="left:839px;top:1157px;width:83px;height:47px;background:#fff;border:1px solid #d9d9de;border-radius:6px;color:#222;font-size:18px;line-height:47px;text-align:center">关闭</div>
<div class="a" style="left:940px;top:1157px;width:83px;height:47px;background:#fff;border:1px solid #d9d9de;border-radius:6px;color:#222;font-size:18px;line-height:47px;text-align:center">打印</div>
<div class="a" style="left:1041px;top:1157px;width:119px;height:47px;background:#fff;border:1px solid #d9d9de;border-radius:6px;color:#222;font-size:18px;line-height:47px;text-align:center">重新配货</div>
<div class="a" style="left:1178px;top:1157px;width:83px;height:47px;background:#fff;border:1px solid #d9d9de;border-radius:6px;color:#222;font-size:18px;line-height:47px;text-align:center">编辑</div>
<div class="a" style="left:1279px;top:1157px;width:119px;height:47px;background:#0a86ff;border-radius:6px;color:#fff;font-size:18px;line-height:49px;text-align:center">确认发货</div>
<div class="a" style="left:808px;top:1135px;width:598px;height:77px;border:3px solid #f62f2f"></div>
<div class="a" style="left:1442px;top:1146px;width:30px;height:30px;border-radius:50%;background:#f63a3a;color:#fff;font-size:20px;line-height:31px;text-align:center">2</div>
<div class="a" style="left:1486px;top:1134px;width:559px;height:55px;background:#666;border-radius:4px"></div>
<svg class="a" style="left:1478px;top:1152px" width="9" height="18" viewBox="0 0 9 18"><path d="M9 0 L0 9 L9 18 Z" fill="#666"/></svg>
<div class="a" style="left:1495px;top:1146px;font-size:28px;line-height:36px;color:#fff;font-weight:normal;">支持打印、重新配货、编辑、确认发货操作</div>
<div class="a" style="left:205px;top:66px;width:144px;height:43px;border:3px solid #f62f2f"></div>
<div class="a" style="left:330px;top:100px;width:30px;height:30px;border-radius:50%;background:#f63a3a"></div>
<svg class="a" style="left:330px;top:100px" width="30" height="30" viewBox="0 0 30 30"><path d="M16.2 6.8 L16.2 21" stroke="#fff" stroke-width="2.2"/><path d="M16.4 7 Q14.5 9 11.6 9.6" stroke="#fff" stroke-width="1.8" fill="none"/></svg>
<div class="a" style="left:2221px;top:180px;width:9px;height:852px;background:#d8d9dd;border-radius:5px 0 0 5px"></div>
</body></html>
